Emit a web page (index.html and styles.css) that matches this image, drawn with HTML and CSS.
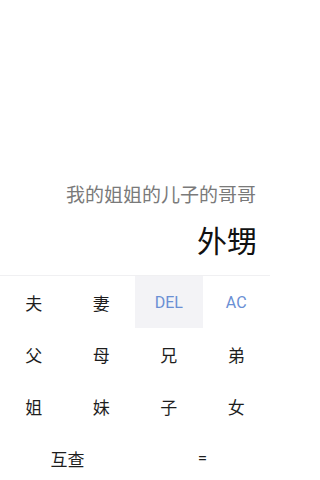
FILE: index.html
```html
<!DOCTYPE html>
<html lang="zh">
<head>
<meta charset="utf-8">
<link rel="stylesheet" href="styles.css">
</head>
<body>
<div class="app">
  <div class="display">
    <div class="input">我的姐姐的儿子的哥哥</div>
    <div class="result">外甥</div>
  </div>
  <div class="keypad">
    <div class="key">夫</div>
    <div class="key">妻</div>
    <div class="key fn pressed">DEL</div>
    <div class="key fn">AC</div>
    <div class="key">父</div>
    <div class="key">母</div>
    <div class="key">兄</div>
    <div class="key">弟</div>
    <div class="key">姐</div>
    <div class="key">妹</div>
    <div class="key">子</div>
    <div class="key">女</div>
    <div class="key wide">互查</div>
    <div class="key wide">=</div>
  </div>
</div>
</body>
</html>
```
FILE: styles.css
```css
html, body {
  margin: 0;
  padding: 0;
  background: #ffffff;
}
body {
  font-family: "Roboto", "Noto Sans CJK SC", sans-serif;
  width: 270px;
  height: 480px;
  overflow: hidden;
}
.app {
  display: flex;
  flex-direction: column;
  height: 480px;
}
.display {
  height: 275px;
  flex-shrink: 0;
  display: flex;
  flex-direction: column;
  justify-content: flex-end;
  align-items: flex-end;
  padding-right: 14px;
  box-sizing: border-box;
}
.input {
  font-size: 19px;
  line-height: 26px;
  color: #7a7a7a;
  margin-bottom: 13px;
}
.result {
  font-size: 30px;
  line-height: 40px;
  color: #111111;
  margin-bottom: 13px;
  margin-right: -1px;
}
.keypad {
  border-top: 1px solid #f0f0f2;
  display: grid;
  grid-template-columns: repeat(4, 1fr);
  grid-auto-rows: 52px;
}
.key {
  display: flex;
  align-items: center;
  justify-content: center;
  font-size: 17px;
  color: #1e1e1e;
}
.key.fn {
  color: #6a8fd4;
  font-size: 16px;
}
.key.pressed {
  background: #f3f3f6;
}
.key.wide {
  grid-column: span 2;
}
```
